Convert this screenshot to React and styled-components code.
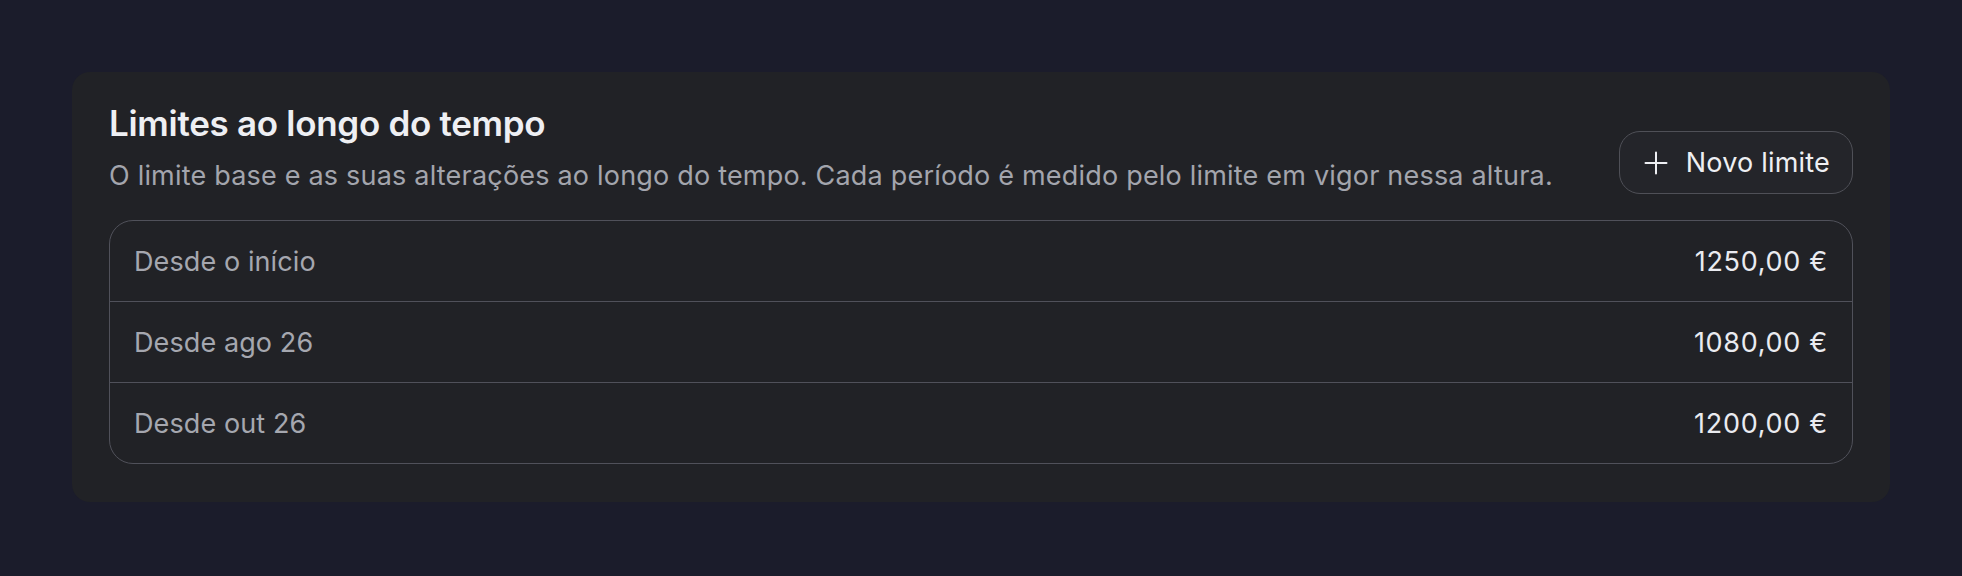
import React from 'react'
import styled, {createGlobalStyle} from 'styled-components'

const GlobalStyle = createGlobalStyle`
  body {
    margin: 0;
    background: #1b1c2b;
    font-family: Inter, "Liberation Sans", sans-serif;
    -webkit-font-smoothing: antialiased;
  }
`

const Page = styled.div`
  padding: 72px;
`

const Card = styled.section`
  background: #212226;
  border-radius: 18px;
  padding: 36px 37px 38px;
`

const Header = styled.header`
  display: flex;
  justify-content: space-between;
  align-items: flex-end;
  gap: 32px;
`

const Title = styled.h2`
  margin: 0;
  font-size: 35px;
  font-weight: 600;
  line-height: 30px;
  color: #eeeff3;
  letter-spacing: -0.3px;
`

const Subtitle = styled.p`
  margin: 24px 0 0;
  font-size: 27px;
  line-height: 28px;
  letter-spacing: 0.2px;
  color: #a3a5ad;
`

const Button = styled.button`
  display: flex;
  align-items: center;
  gap: 18px;
  height: 63px;
  padding: 0 22px 0 24px;
  margin-bottom: -4px;
  background: #24252a;
  border: 1.5px solid #4f5057;
  border-radius: 21px;
  color: #eeeff3;
  font-family: inherit;
  font-size: 27px;
  letter-spacing: 0.2px;
  cursor: pointer;
`

const PlusIcon = styled.svg`
  width: 24px;
  height: 24px;
  flex-shrink: 0;
`

const Table = styled.div`
  margin-top: 30px;
  border: 1.5px solid #50515a;
  border-radius: 24px;
  overflow: hidden;
`

const Row = styled.div`
  display: flex;
  justify-content: space-between;
  align-items: center;
  height: 80px;
  padding: 0 24px;
  border-top: ${props => (props.first ? 'none' : '1.5px solid #50515a')};
  font-size: 27px;
`

const Since = styled.span`
  color: #a5a7af;
  letter-spacing: 0.1px;
`

const Amount = styled.span`
  color: #eaebf0;
  letter-spacing: 0.7px;
`

const limits = [
  {id: 1, since: 'Desde o início', amount: '1250,00 €'},
  {id: 2, since: 'Desde ago 26', amount: '1080,00 €'},
  {id: 3, since: 'Desde out 26', amount: '1200,00 €'},
]

function App() {
  return (
    <>
      <GlobalStyle />
      <Page>
        <Card>
          <Header>
            <div>
              <Title>Limites ao longo do tempo</Title>
              <Subtitle>
                O limite base e as suas alterações ao longo do tempo. Cada período é medido pelo limite em vigor nessa altura.
              </Subtitle>
            </div>
            <Button>
              <PlusIcon viewBox="0 0 24 24" fill="none" stroke="currentColor" strokeWidth="2" strokeLinecap="round">
                <path d="M12 1.5v21M1.5 12h21" />
              </PlusIcon>
              Novo limite
            </Button>
          </Header>
          <Table>
            {limits.map((item, i) => (
              <Row key={item.id} first={i === 0}>
                <Since>{item.since}</Since>
                <Amount>{item.amount}</Amount>
              </Row>
            ))}
          </Table>
        </Card>
      </Page>
    </>
  )
}

export default App
